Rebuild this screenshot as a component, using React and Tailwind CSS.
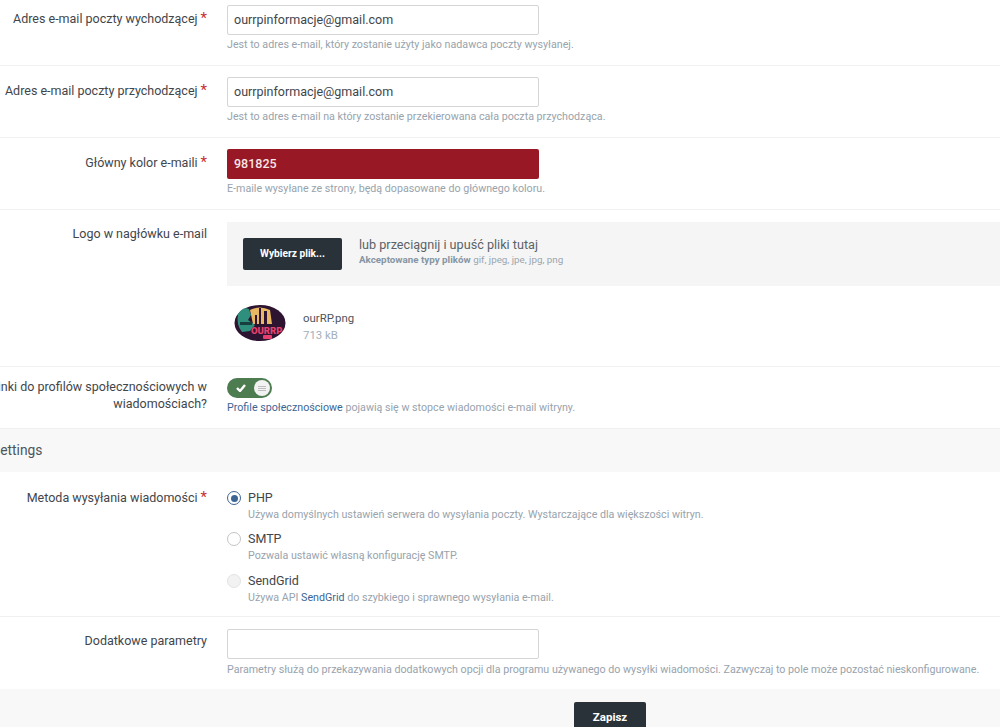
import React from "react";

const font = { fontFamily: "Roboto, sans-serif" };

function Req() {
  return <span className="text-[#c9302c] text-[15px] leading-none ml-[3px]">*</span>;
}

function Row({ label, required, children, className = "pt-[11px] h-[72px]", labelClass = "pt-[5px]" }) {
  return (
    <div className={`flex border-b border-[#f0f0f0] ${className}`}>
      <div className={`w-[287px] shrink-0 pr-[20px] text-right text-[12.5px] leading-[17px] text-[#3f464b] ${labelClass}`}>
        {label}
        {required && <Req />}
      </div>
      <div className="flex-1 min-w-0">{children}</div>
    </div>
  );
}

function Hint({ children, className = "" }) {
  return <p className={`text-[10.7px] leading-[14px] text-[#98a3ad] ${className}`}>{children}</p>;
}

function Field({ value = "" }) {
  return (
    <div className="w-[312px] h-[30px] bg-white border border-[#d5d5d5] rounded-[2px] px-[6px] flex items-center text-[12.5px] text-[#3f464b]">
      {value}
    </div>
  );
}

function Radio({ checked, disabled }) {
  return (
    <span
      className={`w-[14px] h-[14px] mt-[1px] rounded-full shrink-0 flex items-center justify-center border ${
        checked ? "bg-white border-[#3d6594]" : disabled ? "border-[#e3e3e3] bg-[#f2f2f2]" : "bg-white border-[#c4c4c4]"
      }`}
    >
      {checked && <span className="w-[7px] h-[7px] rounded-full bg-[#3d6594]" />}
    </span>
  );
}

function RadioRow({ title, checked, disabled, height, children }) {
  return (
    <div className={`flex gap-[7px] ${height}`}>
      <Radio checked={checked} disabled={disabled} />
      <div>
        <div className="text-[12.5px] leading-[16px] text-[#3f464b]">{title}</div>
        <Hint className="mt-[2px]">{children}</Hint>
      </div>
    </div>
  );
}

function Logo() {
  return (
    <svg width="54" height="40" viewBox="0 0 54 40" className="shrink-0">
      <ellipse cx="27" cy="20" rx="25.5" ry="18" fill="#2d1430" />
      <path d="M17 7 Q27 2 37 7 L39 21 L20 21 Z" fill="#e9b863" />
      <path d="M26 5h2v16h-2zM31 8h3v13h-3zM22 12h2v9h-2z" fill="#2d1430" />
      <path d="M5 11 Q10 3 16 6 L18 12 L15 17 L22 22 L17 28 L9 29 Q3 22 5 11Z" fill="#2f8f7d" />
      <path d="M7 19h12v3H7z" fill="#173f3d" />
      <text x="18" y="31" fontSize="9.5" fontWeight="900" fill="#e8406f">OURRP</text>
      <rect x="30" y="32" width="9" height="4" rx="1" fill="#e8406f" />
    </svg>
  );
}

export default function App() {
  return (
    <div className="w-[1000px] h-[727px] overflow-hidden bg-white" style={font}>
      <div className="w-[1060px] -ml-[60px] -mt-[6px]">
        <Row label="Adres e-mail poczty wychodzącej" required>
          <Field value="ourrpinformacje@gmail.com" />
          <Hint className="mt-[3px]">Jest to adres e-mail, który zostanie użyty jako nadawca poczty wysyłanej.</Hint>
        </Row>
        <Row label="Adres e-mail poczty przychodzącej" required>
          <Field value="ourrpinformacje@gmail.com" />
          <Hint className="mt-[3px]">Jest to adres e-mail na który zostanie przekierowana cała poczta przychodząca.</Hint>
        </Row>
        <Row label="Główny kolor e-maili" required>
          <div className="w-[312px] h-[30px] bg-[#981825] rounded-[2px] px-[7px] flex items-center text-[12.5px] font-medium text-[#f5e6e8]">
            981825
          </div>
          <Hint className="mt-[3px]">E-maile wysyłane ze strony, będą dopasowane do głównego koloru.</Hint>
        </Row>
        <Row label="Logo w nagłówku e-mail" className="pt-[12px] h-[157px]" labelClass="pt-[3px]">
          <div className="h-[64px] bg-[#f5f5f5] flex items-center pl-[16px]">
            <div className="w-[99px] h-[32px] bg-[#283238] rounded-[2px] flex items-center justify-center text-[10.2px] font-bold text-white">
              Wybierz plik...
            </div>
            <div className="ml-[17px] -mt-[5px]">
              <div className="text-[12.65px] leading-[16px] text-[#5a6268]">lub przeciągnij i upuść pliki tutaj</div>
              <div className="text-[9.8px] leading-[13px] text-[#9aa5ae]">
                <span className="font-bold text-[#8695a4]">Akceptowane typy plików</span> gif, jpeg, jpe, jpg, png
              </div>
            </div>
          </div>
          <div className="flex items-center mt-[17px] pl-[6px]">
            <Logo />
            <div className="ml-[16px] mt-[7px]">
              <div className="text-[11.4px] leading-[16px] text-[#4d555b]">ourRP.png</div>
              <div className="text-[11.4px] leading-[16px] mt-[1px] text-[#a3afbb]">713 kB</div>
            </div>
          </div>
        </Row>
        <Row label="Pokaż linki do profilów społecznościowych w wiadomościach?" className="pt-[11px] h-[62px]" labelClass="pt-0">
          <div className="w-[45px] h-[20px] rounded-full bg-[#4d7c50] flex items-center justify-between pl-[9px] pr-[2px]">
            <svg width="10" height="8" viewBox="0 0 10 8">
              <path d="M1 4l3 3 5-6" fill="none" stroke="#fff" strokeWidth="2.4" />
            </svg>
            <span className="w-[16px] h-[16px] rounded-full bg-[#f2f2f2] flex flex-col items-center justify-center gap-[1px]">
              <i className="w-[8px] h-[1px] bg-[#bdbdbd]" />
              <i className="w-[8px] h-[1px] bg-[#bdbdbd]" />
              <i className="w-[8px] h-[1px] bg-[#bdbdbd]" />
            </span>
          </div>
          <Hint className="mt-[3px]">
            <span className="text-[#3d6594]">Profile społecznościowe</span> pojawią się w stopce wiadomości e-mail witryny.
          </Hint>
        </Row>
        <div className="h-[43px] bg-[#f8f8f8] flex items-center pl-[52px] text-[13.8px] text-[#4d555b]">Settings</div>
        <Row label="Metoda wysyłania wiadomości" required className="pt-[18px] h-[145px]" labelClass="-mt-[1px]">
          <RadioRow title="PHP" checked height="h-[41px]">Używa domyślnych ustawień serwera do wysyłania poczty. Wystarczające dla większości witryn.</RadioRow>
          <RadioRow title="SMTP" height="h-[42px]">Pozwala ustawić własną konfigurację SMTP.</RadioRow>
          <RadioRow title="SendGrid" disabled height="h-[41px]">
            Używa API <span className="text-[#3d6594]">SendGrid</span> do szybkiego i sprawnego wysyłania e-mail.
          </RadioRow>
        </Row>
        <div className="flex h-[72px] pt-[12px]">
          <div className="w-[287px] shrink-0 pr-[20px] text-right text-[12.5px] leading-[17px] text-[#3f464b] pt-[3px]">Dodatkowe parametry</div>
          <div className="flex-1 min-w-0">
            <Field />
            <Hint className="mt-[4px] whitespace-nowrap">
              Parametry służą do przekazywania dodatkowych opcji dla programu używanego do wysyłki wiadomości. Zazwyczaj to pole może pozostać nieskonfigurowane.
            </Hint>
          </div>
        </div>
        <div className="h-[60px] bg-[#f8f8f8] flex justify-start pt-[13px] pl-[634px]">
          <div className="w-[72px] h-[32px] bg-[#283238] rounded-[2px] flex items-center justify-center text-[11.5px] font-bold text-white">Zapisz</div>
        </div>
      </div>
    </div>
  );
}
